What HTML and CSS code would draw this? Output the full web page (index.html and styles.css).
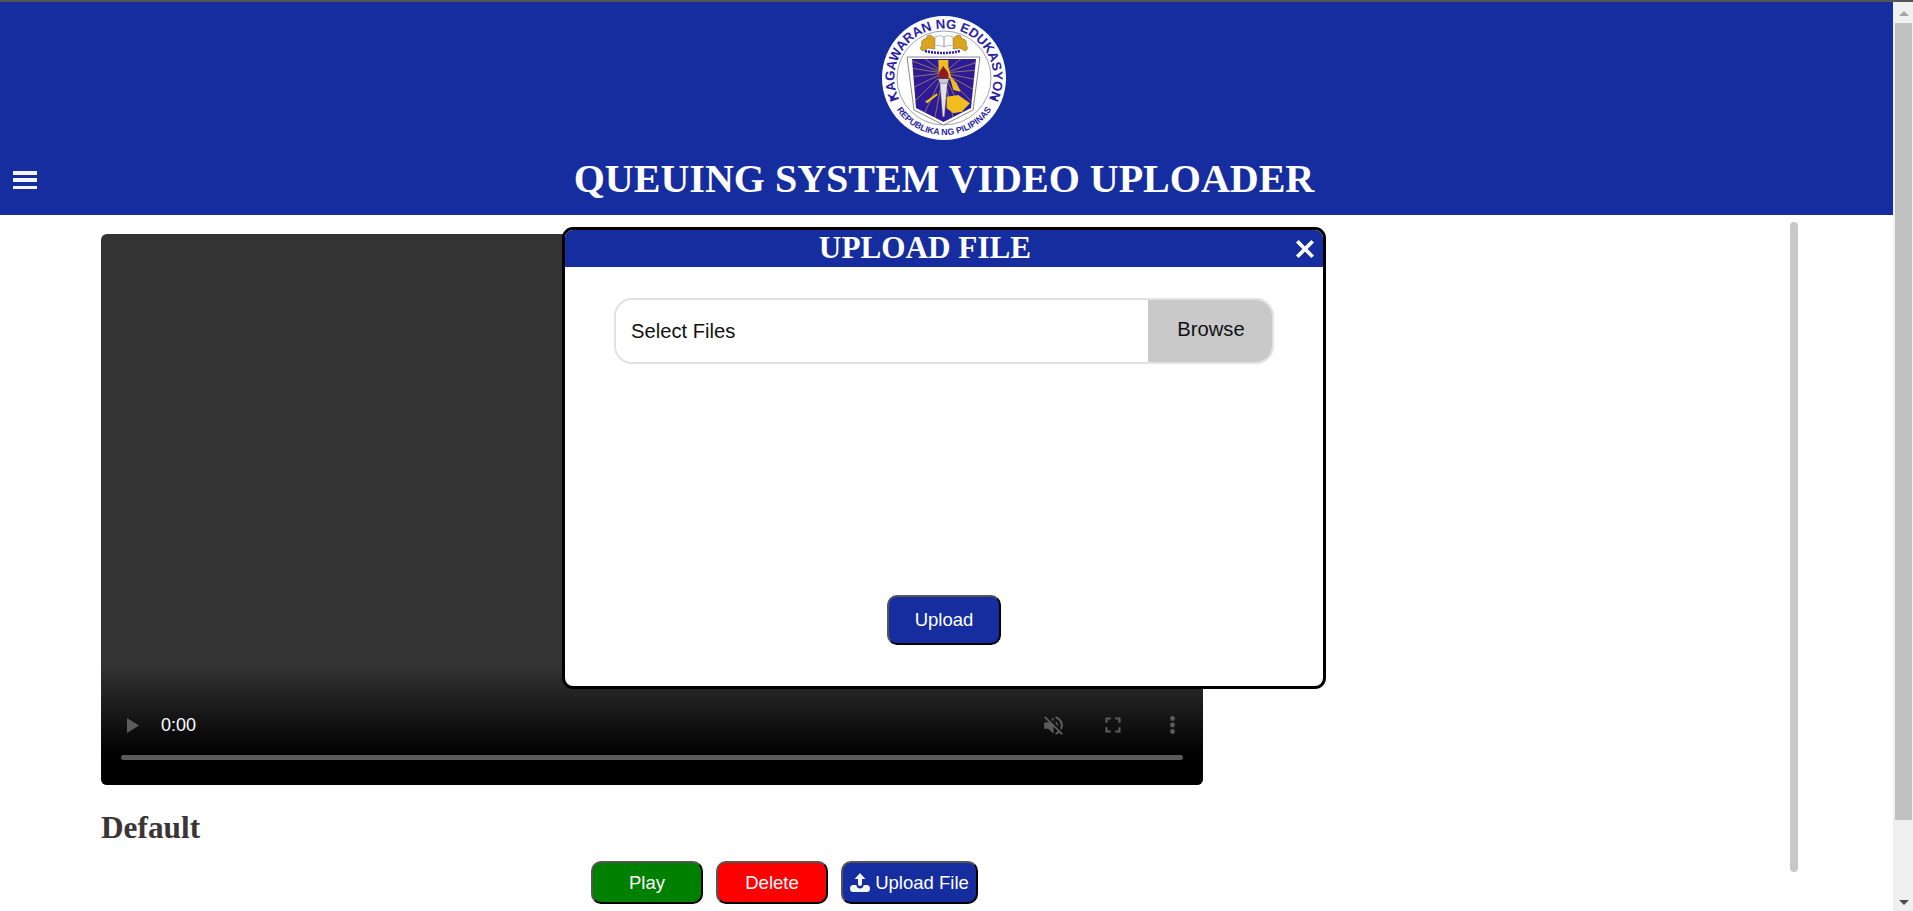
FILE: index.html
```html
<!DOCTYPE html>
<html lang="en">
<head>
<meta charset="utf-8">
<title>Queuing System Video Uploader</title>
<link rel="stylesheet" href="styles.css">
</head>
<body>
<div class="shell">
  <div class="app">
    <header class="site-header">
      <svg class="logo" viewBox="0 0 124 124" role="img" aria-label="Kagawaran ng Edukasyon seal">
        <defs>
          <path id="arc-top" d="M24 93.8 A49.5 49.5 0 1 1 100 93.8"/>
          <path id="arc-bottom" d="M8.4 81.5 A57 57 0 0 0 115.6 81.5"/>
          <clipPath id="shield-clip"><path d="M30 43 H94 L89 92 L61.5 106 L34 92Z"/></clipPath>
          <g id="lion">
            <path d="M40 29 C38 24 43 22 45 23 C43 19 49 18 51 21 C55 23 55 27 52 29 L53 33 L46 32 L41 35 C38 34 38 31 40 29Z"/>
          </g>
        </defs>
        <circle cx="62" cy="62" r="62" fill="#fff"/>
        <circle cx="62" cy="62" r="47" fill="none" stroke="#8a8aa0" stroke-width=".8"/>
        <text class="seal-top"><textPath href="#arc-top" startOffset="50%" text-anchor="middle">KAGAWARAN NG EDUKASYON</textPath></text>
        <text class="seal-bottom"><textPath href="#arc-bottom" startOffset="50%" text-anchor="middle">REPUBLIKA NG PILIPINAS</textPath></text>
        <circle cx="10" cy="82" r="2" fill="#2a1fa8"/>
        <circle cx="112" cy="82" r="2" fill="#2a1fa8"/>
        <use href="#lion" fill="#dca520" stroke="#8a6a10" stroke-width=".6"/>
        <use href="#lion" transform="translate(124 0) scale(-1 1)" fill="#dca520" stroke="#8a6a10" stroke-width=".6"/>
        <path d="M53 21 Q58 18 62 21 Q66 18 71 21 V30 Q66 28 62 31 Q58 28 53 30Z" fill="#fff" stroke="#8a8a8a" stroke-width=".6"/>
        <path d="M62 21V31" stroke="#666" stroke-width=".7"/>
        <path d="M43 35 Q61 39 78 35" fill="none" stroke="#2a1fa8" stroke-width="2.6" stroke-dasharray="2 1"/>
        <path d="M25 41 H98 L91 94 L61.5 109 L32 94Z" fill="#fff" stroke="#8a8a8a" stroke-width="1"/>
        <path d="M30 43 H94 L89 92 L61.5 106 L34 92Z" fill="#2c1a96"/>
        <g clip-path="url(#shield-clip)" stroke="#d8b040" stroke-width=".6">
          <path d="M61.5 57 L28 44M61.5 57 L28 52M61.5 57 L28 61M61.5 57 L30 72M61.5 57 L34 84M61.5 57 L42 98M61.5 57 L52 106M61.5 57 L42 42M61.5 57 L80 42M61.5 57 L96 46M61.5 57 L96 54M61.5 57 L96 64M61.5 57 L94 75M61.5 57 L92 88M61.5 57 L82 100M61.5 57 L72 106"/>
        </g>
        <path d="M56.3 44 H66.3 V50.7 L69 60.7 L74.7 67.3 L78.7 75.7 L71.3 74 L68 62 H57Z" fill="#f0bd1c"/>
        <path d="M64.7 80.7 L76.3 79 L88 87.3 L79.7 95.7 L71.3 97.3 L64.7 92.3Z" fill="#f0bd1c"/>
        <path d="M43 85.7 L54.7 77.3 L55.7 79 L45.3 87.3Z" fill="#f0bd1c"/>
        <path d="M57.3 62.3 C55.5 56 59 54 61.3 49.7 C63.5 54 68 56 66.3 62.3Z" fill="#8e1d22"/>
        <path d="M56.3 63 H67 L65.3 67.3 H58Z" fill="#c9c9d2"/>
        <path d="M58 67.3 H65.3 L62.3 100.7 H60.7Z" fill="#e2e2ea" stroke="#777" stroke-width=".4"/>
      </svg>
      <div class="title-row">
        <button class="menu-btn" type="button" aria-label="Menu"><span></span><span></span><span></span></button>
        <h1>QUEUING SYSTEM VIDEO UPLOADER</h1>
      </div>
    </header>
    <main class="page">
      <section class="content">
        <div class="player">
          <div class="video-controls">
            <div class="control-row">
              <svg class="ctl-play" viewBox="0 0 12 15"><path d="M0 0 L12 7.5 L0 15Z"/></svg>
              <span class="ctl-time">0:00</span>
              <svg class="ctl-mute" viewBox="0 0 24 24"><path d="M16.5 12c0-1.77-1.02-3.29-2.5-4.03v2.21l2.45 2.45c.03-.2.05-.41.05-.63zm2.5 0c0 .94-.2 1.82-.54 2.64l1.51 1.51C20.63 14.91 21 13.5 21 12c0-4.28-2.99-7.86-7-8.77v2.06c2.89.86 5 3.54 5 6.71zM4.27 3L3 4.27 7.73 9H3v6h4l5 5v-6.73l4.25 4.25c-.67.52-1.42.93-2.25 1.18v2.06c1.38-.31 2.63-.95 3.69-1.81L19.73 21 21 19.73l-9-9L4.27 3zM12 4L9.91 6.09 12 8.18V4z"/></svg>
              <svg class="ctl-full" viewBox="0 0 24 24"><path d="M7 14H5v5h5v-2H7v-3zm-2-4h2V7h3V5H5v5zm12 7h-3v2h5v-5h-2v3zM14 5v2h3v3h2V5h-5z"/></svg>
              <svg class="ctl-more" viewBox="0 0 5 18"><circle cx="2.5" cy="2.5" r="2.4"/><circle cx="2.5" cy="9" r="2.4"/><circle cx="2.5" cy="15.5" r="2.4"/></svg>
            </div>
            <div class="ctl-progress"></div>
          </div>
        </div>
        <h2>Default</h2>
        <div class="actions">
          <button class="btn btn-play" type="button">Play</button>
          <button class="btn btn-delete" type="button">Delete</button>
          <button class="btn btn-upload" type="button">
            <svg class="upload-icon" viewBox="0 0 20 20"><path d="M10 0 L15.5 6 H12 V11 Q12 13 10 13 Q8 13 8 11 V6 H4.5Z"/><path d="M2.5 12 H6.3 Q7 15.5 10 15.5 Q13 15.5 13.7 12 H17.5 Q20 12.5 20 15.5 Q20 19 17 19 H3 Q0 19 0 15.5 Q0 12.5 2.5 12Z"/></svg>
            Upload File
          </button>
        </div>
      </section>
      <div class="list-scroll"></div>
    </main>
  </div>
  <aside class="scrollbar" aria-hidden="true">
    <div class="sb-up"><i></i></div>
    <div class="sb-thumb"></div>
    <div class="sb-down"><i></i></div>
  </aside>
</div>
<div class="modal">
  <div class="modal-head">
    <h3>UPLOAD FILE</h3>
    <button class="modal-close" type="button" aria-label="Close">
      <svg viewBox="0 0 20 20"><path d="M3 3 L17 17 M17 3 L3 17"/></svg>
    </button>
  </div>
  <div class="modal-body">
    <div class="file-field">
      <span class="file-label">Select Files</span>
      <span class="file-browse">Browse</span>
    </div>
    <button class="btn btn-send" type="button">Upload</button>
  </div>
</div>
</body>
</html>
```
FILE: styles.css
```css
* { box-sizing: border-box; }
html { overflow: hidden; }
body { margin: 0; height: 911px; overflow: hidden; font-family: "Liberation Sans", Arial, sans-serif; background: #fff; border-top: 2px solid #555; position: relative; }
.shell { display: flex; height: 909px; }
.app { flex: 1; min-width: 0; }

.scrollbar { width: 20px; background: #f0f0f0; display: flex; flex-direction: column; padding: 0 1px 0 2px; }
.sb-up { height: 21px; display: flex; justify-content: center; padding-top: 9px; }
.sb-up i { width: 0; height: 0; border: 5px solid transparent; border-top: 0; border-bottom: 5px solid #a3a3a3; }
.sb-thumb { height: 797px; background: #c1c1c1; }
.sb-down { flex: 1; display: flex; justify-content: center; align-items: flex-end; padding-bottom: 6px; }
.sb-down i { width: 0; height: 0; border: 5px solid transparent; border-bottom: 0; border-top: 5px solid #505050; }

.site-header { background: #152d9e; height: 213px; display: flex; flex-direction: column; align-items: center; padding: 14px 5px 0 0; }
.logo { width: 124px; height: 124px; display: block; }
.seal-top { font: 700 13.2px "Liberation Sans", Arial, sans-serif; fill: #2a1fa8; }
.seal-bottom { font: 700 8.8px "Liberation Sans", Arial, sans-serif; fill: #2a1fa8; }
.title-row { width: 100%; display: flex; align-items: center; justify-content: center; position: relative; flex: 1; padding-top: 2px; }
.title-row h1 { margin: 0; color: #fff; font: 700 40px "Liberation Serif", "Times New Roman", serif; }
.menu-btn { position: absolute; left: 13px; top: 31px; width: 24px; height: 18px; padding: 0; border: 0; background: none; display: flex; flex-direction: column; justify-content: space-between; }
.menu-btn span { display: block; height: 3.5px; width: 24px; background: #f4f4fb; }

.page { display: flex; padding: 7px 95px 0 101px; justify-content: space-between; align-items: flex-start; }
.content { width: 1102px; padding-top: 12px; }
.player { width: 1102px; height: 551px; background: #333; border-radius: 6px; overflow: hidden; display: flex; flex-direction: column; justify-content: flex-end; }
.video-controls { height: 120px; padding: 41px 20px 25px; background: linear-gradient(rgba(0,0,0,0), #000 75%); }
.control-row { height: 38px; display: flex; align-items: center; margin-bottom: 11px; }
.control-row svg { fill: #5c5c5c; display: block; flex: none; }
.ctl-play { width: 12px; height: 15px; margin-left: 6px; }
.ctl-time { color: #fff; font-size: 18px; margin-left: 22px; }
.ctl-mute { width: 25px; height: 25px; margin-left: auto; }
.ctl-full { width: 26px; height: 26px; margin-left: 34px; }
.ctl-more { width: 5px; height: 18px; margin: 0 8px 0 44px; }
.ctl-progress { height: 5px; border-radius: 3px; background: #5a5a5a; }

.content h2 { margin: 25px 0 0; font: 700 31.3px/36px "Liberation Serif", "Times New Roman", serif; color: #3b3535; }
.actions { display: flex; gap: 13px; margin-top: 15px; padding-left: 490px; }
.btn { height: 43px; border: 2px outset #555; border-radius: 10px; color: #fff; font: 18.5px "Liberation Sans", Arial, sans-serif; padding: 0; display: inline-flex; align-items: center; justify-content: center; }
.btn-play { width: 112px; background: #008000; }
.btn-delete { width: 112px; background: #f00; }
.btn-upload { width: 137px; background: #152d9e; gap: 5px; }
.upload-icon { width: 20px; height: 20px; fill: #f4f4fb; }
.list-scroll { width: 8px; height: 650px; background: #c8c8c8; border-radius: 4px; }

.modal { position: absolute; left: 562px; top: 225px; width: 764px; height: 462px; background: #fff; border: 3px solid #000; border-radius: 11px; overflow: hidden; display: flex; flex-direction: column; }
.modal-head { height: 37px; background: #152d9e; display: flex; align-items: center; justify-content: center; position: relative; padding: 0 38px 2px 0; }
.modal-head h3 { margin: 0; color: #fff; font: 700 31.2px/35px "Liberation Serif", "Times New Roman", serif; }
.modal-close { position: absolute; right: 7px; top: 8px; width: 22px; height: 22px; padding: 0; border: 0; background: none; }
.modal-close svg { display: block; width: 22px; height: 22px; fill: none; stroke: #fff; stroke-width: 3.4; }
.modal-body { flex: 1; display: flex; flex-direction: column; align-items: center; padding: 31px 49px 0; }
.file-field { width: 660px; height: 66px; border: 2px solid #e2e2e2; border-radius: 18px; display: flex; align-items: stretch; overflow: hidden; font-size: 20.2px; color: #111; flex: none; }
.file-label { flex: 1; display: flex; align-items: center; padding-left: 15px; }
.file-browse { width: 126px; margin: -2px -2px -2px 0; padding-bottom: 3px; background: #c9c9c9; display: flex; align-items: center; justify-content: center; }
.btn-send { width: 114px; height: 50px; margin-top: 231px; background: #152d9e; flex: none; }
```
